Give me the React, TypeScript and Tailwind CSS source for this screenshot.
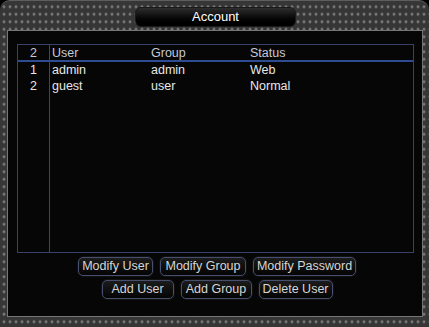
const users = [
  { id: 1, name: "admin", group: "admin", status: "Web" },
  { id: 2, name: "guest", group: "user", status: "Normal" },
];

function Btn({ label, w }: { label: string; w: string }) {
  return (
    <button
      className={`${w} h-[19px] rounded-[5px] border border-[#46506e] bg-gradient-to-b from-[#1c1c1c] to-[#050505] text-[12.5px] leading-none text-[#d6d6d6] shadow-[0_0_0_1px_#111]`}
    >
      {label}
    </button>
  );
}

export default function App() {
  return (
    <div
      className="w-[429px] h-[327px] bg-black overflow-hidden"
      style={{ fontFamily: '"Liberation Sans", Arial, sans-serif' }}
    >
      <div className="flex flex-col h-full rounded-t-[10px] border-t border-[#5e5e5e] bg-[#363636] bg-[radial-gradient(circle,#7a7a7a_1.1px,transparent_1.8px)] bg-[length:6px_7.5px] bg-[position:1px_2px]">
        {/* title bar */}
        <div className="h-[29px] flex justify-center pt-[6px]">
          <div className="ml-[2px] w-[161px] h-[20px] rounded-[6px] border border-[#1a1a1a] bg-gradient-to-b from-[#2e2e2e] via-[#0c0c0c] to-black flex items-center justify-center text-[13px] text-white">
            Account
          </div>
        </div>

        {/* panel */}
        <div className="flex-1 ml-[7px] mr-[6px] border border-[#767676] bg-[#060606] flex flex-col">
          <div className="mt-[13px] ml-[9px] mr-[8px] h-[209px] border border-[#36426c] flex">
            <div className="w-[32px] border-r border-[#3a4672] flex flex-col">
              <div className="h-[17px] border-b-2 border-[#2f4c92] text-[12.5px] text-[#c4cad8] text-center leading-[17px]">
                2
              </div>
              {users.map((u) => (
                <div key={u.id} className="h-[16px] text-[12.5px] text-[#e6e6e6] text-center leading-[16px]">
                  {u.id}
                </div>
              ))}
            </div>
            <div className="flex-1 flex flex-col">
              <div className="h-[17px] border-b-2 border-[#2f4c92] flex text-[12.5px] text-[#c4cad8] leading-[17px] pl-[2px]">
                <span className="w-[99px]">User</span>
                <span className="w-[99px]">Group</span>
                <span>Status</span>
              </div>
              {users.map((u) => (
                <div key={u.id} className="h-[16px] flex text-[12.5px] text-[#e6e6e6] leading-[16px] pl-[2px]">
                  <span className="w-[99px]">{u.name}</span>
                  <span className="w-[99px]">{u.group}</span>
                  <span>{u.status}</span>
                </div>
              ))}
            </div>
          </div>

          <div className="mt-[4px] pl-[4px] flex flex-col items-center gap-[4px]">
            <div className="flex gap-[7px]">
              <Btn label="Modify User" w="w-[75px]" />
              <Btn label="Modify Group" w="w-[86px]" />
              <Btn label="Modify Password" w="w-[103px]" />
            </div>
            <div className="flex gap-[7px]">
              <Btn label="Add User" w="w-[72px]" />
              <Btn label="Add Group" w="w-[71px]" />
              <Btn label="Delete User" w="w-[74px]" />
            </div>
          </div>
        </div>

        {/* bottom strip */}
        <div className="h-[10px]" />
      </div>
    </div>
  );
}
